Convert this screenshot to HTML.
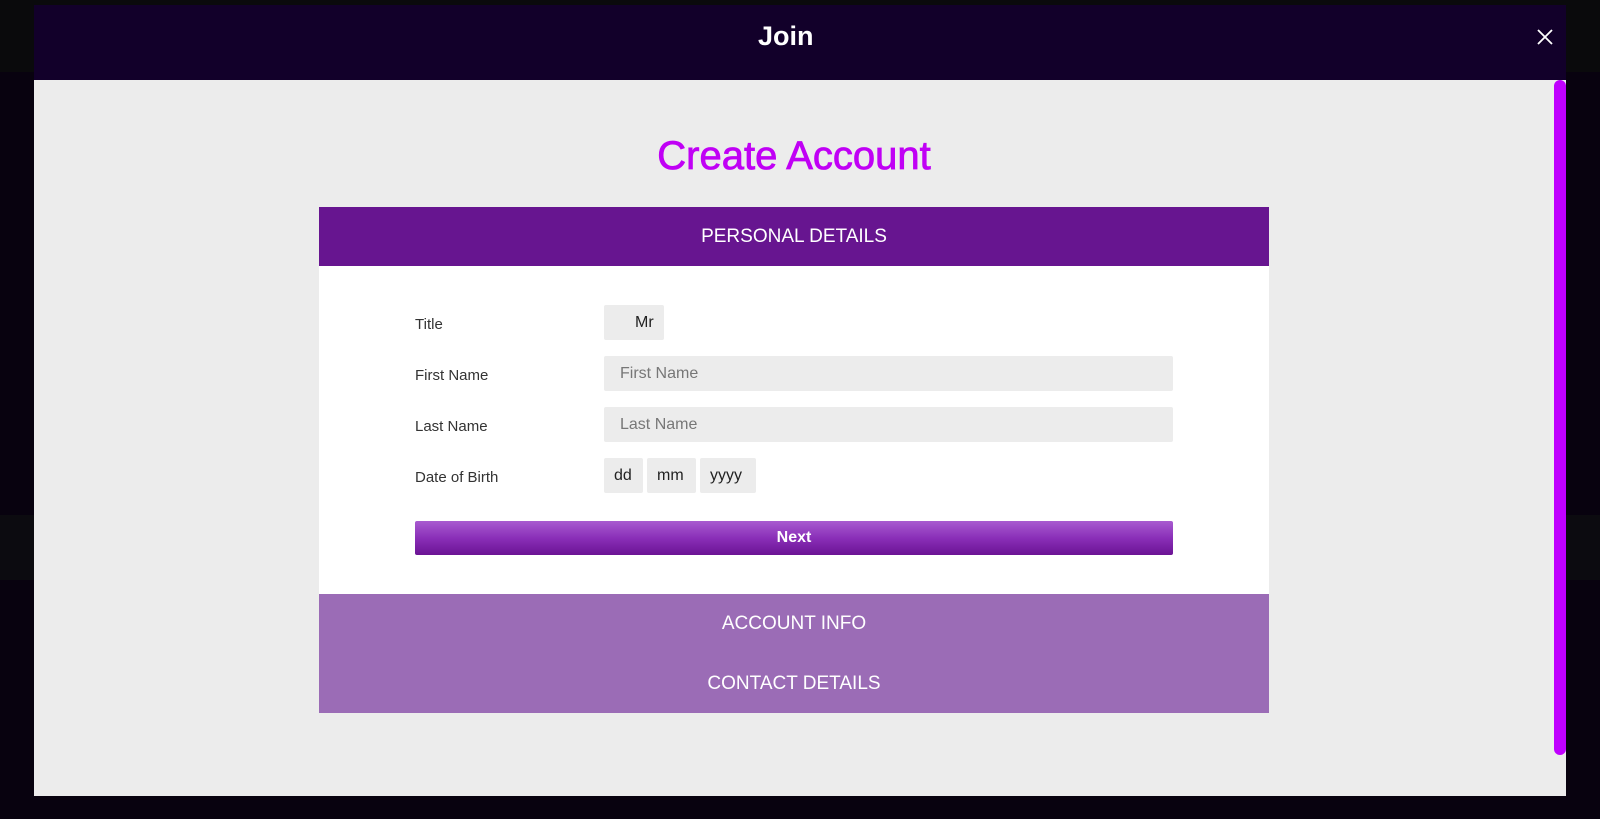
<!DOCTYPE html>
<html><head><style>
*{margin:0;padding:0;box-sizing:border-box}
body{width:1600px;height:819px;overflow:hidden;background:#08020f;font-family:"Liberation Sans",Arial,sans-serif;position:relative}
.bgtop{position:absolute;left:0;top:0;width:1600px;height:72px;background:#0a0a0c}
.bgband{position:absolute;left:0;top:515px;width:1600px;height:65px;background:#0c0b10}
.head{position:absolute;left:34px;top:5px;width:1532px;height:75px;background:#12002a;color:#fff;font-weight:bold;font-size:27px;line-height:62px}
.head span{position:absolute;left:724px;top:0}
.x{position:absolute;right:13px;top:24px;width:16px;height:16px}
.body{position:absolute;left:34px;top:80px;width:1532px;height:716px;background:#ececec}
.sb{position:absolute;left:1554px;top:80px;width:12px;height:675px;background:#c000ff;border-radius:6px}
h1{position:absolute;left:0;width:1588px;top:134px;text-align:center;color:#c000f5;font-size:40px;font-weight:normal;-webkit-text-stroke:0.8px #c000f5}
.panel{position:absolute;left:319px;top:207px;width:950px}
.ph{height:59px;background:#671590;color:#fff;text-align:center;font-size:19px;line-height:59px}
.pb{height:328px;background:#fff;position:relative}
.lbl{position:absolute;left:96px;font-size:15px;color:#333}
.in{position:absolute;background:#ececec;border-radius:2px;font-size:16px;color:#222;line-height:35px;height:35px}
.ph2{height:60px;background:#9b6cb6;color:#fff;text-align:center;font-size:19px;line-height:60px}
.next{position:absolute;left:96px;top:255px;width:758px;height:34px;border-radius:2px;background:linear-gradient(#a85bd0,#8a2fb8 50%,#6b1394);color:#fff;font-weight:bold;text-align:center;line-height:34px;font-size:16px}
</style></head><body>
<div class="bgtop"></div><div class="bgband"></div>
<div class="head"><span>Join</span>
<svg class="x" viewBox="0 0 16 16"><path d="M1 1L15 15M15 1L1 15" stroke="#fff" stroke-width="1.8"/></svg></div>
<div class="body"></div>
<div class="sb"></div>
<h1>Create Account</h1>
<div class="panel">
<div class="ph">PERSONAL DETAILS</div>
<div class="pb">
<div class="lbl" style="top:50px">Title</div>
<div class="in" style="left:285px;top:39px;width:60px;padding-left:31px">Mr</div>
<div class="lbl" style="top:101px">First Name</div>
<div class="in" style="left:285px;top:90px;width:569px;padding-left:16px;color:#777">First Name</div>
<div class="lbl" style="top:152px">Last Name</div>
<div class="in" style="left:285px;top:141px;width:569px;padding-left:16px;color:#777">Last Name</div>
<div class="lbl" style="top:203px">Date of Birth</div>
<div class="in" style="left:285px;top:192px;width:39px;padding-left:10px">dd</div>
<div class="in" style="left:328px;top:192px;width:49px;padding-left:10px">mm</div>
<div class="in" style="left:381px;top:192px;width:56px;padding-left:10px">yyyy</div>
<div class="next">Next</div>
</div>
<div class="ph2">ACCOUNT INFO</div>
<div class="ph2" style="height:59px">CONTACT DETAILS</div>
</div>
</body></html>
